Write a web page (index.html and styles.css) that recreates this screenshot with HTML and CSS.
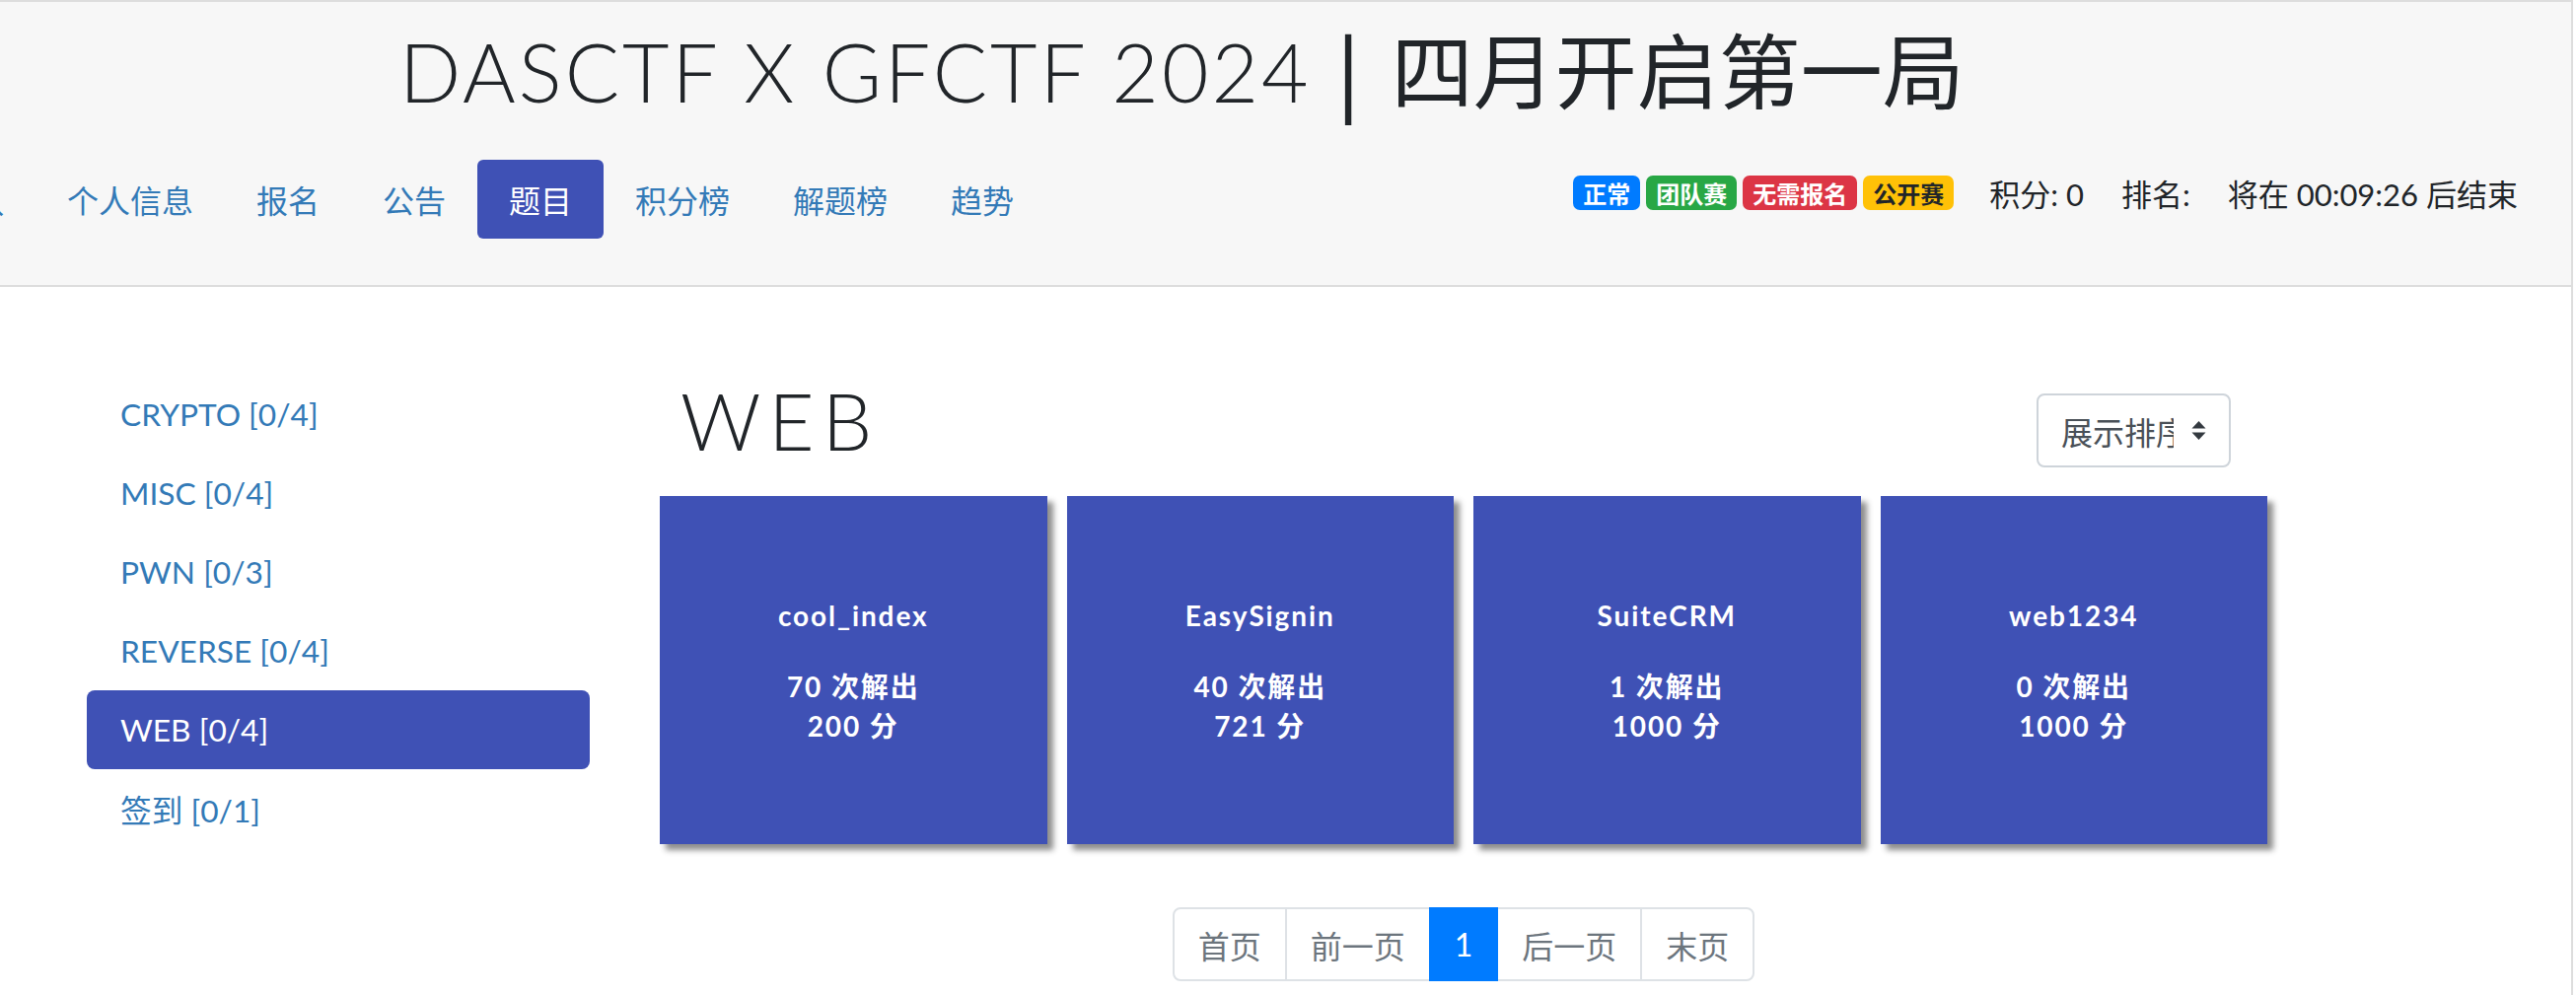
FILE: index.html
```html
<!DOCTYPE html>
<html lang="zh-CN">
<head>
<meta charset="utf-8">
<title>DASCTF X GFCTF 2024 | 四月开启第一局</title>
<link rel="stylesheet" href="styles.css">
</head>
<body>
<div class="page">
  <header class="top">
    <h1 class="title"><span class="title-lat">DASCTF X GFCTF 2024</span><span class="title-bar">|</span><span class="title-cjk">四月开启第一局</span></h1>
    <div class="navrow">
      <ul class="nav">
        <li><a class="nav-link">团队</a></li>
        <li><a class="nav-link">个人信息</a></li>
        <li><a class="nav-link">报名</a></li>
        <li><a class="nav-link">公告</a></li>
        <li><a class="nav-link active">题目</a></li>
        <li><a class="nav-link">积分榜</a></li>
        <li><a class="nav-link">解题榜</a></li>
        <li><a class="nav-link">趋势</a></li>
      </ul>
      <div class="status">
        <span class="badge badge-blue">正常</span>
        <span class="badge badge-green">团队赛</span>
        <span class="badge badge-red">无需报名</span>
        <span class="badge badge-yellow">公开赛</span>
        <span class="stat stat-first">积分: 0</span>
        <span class="stat">排名:</span>
        <span class="stat">将在 00:09:26 后结束</span>
      </div>
    </div>
  </header>

  <div class="content">
    <aside class="side">
      <a class="cat">CRYPTO [0/4]</a>
      <a class="cat">MISC [0/4]</a>
      <a class="cat">PWN [0/3]</a>
      <a class="cat">REVERSE [0/4]</a>
      <a class="cat active">WEB [0/4]</a>
      <a class="cat">签到 [0/1]</a>
    </aside>

    <main class="main">
      <div class="main-head">
        <h2 class="cat-title">WEB</h2>
        <div class="sort">
          <span class="sort-text">展示排序</span>
          <svg class="sort-icon" width="15" height="19" viewBox="0 0 15 19"><path d="M7.5 0 L14.5 7.5 L0.5 7.5 Z M0.5 11.5 L14.5 11.5 L7.5 19 Z" fill="#343a40"/></svg>
        </div>
      </div>

      <div class="cards">
        <div class="card">
          <div class="card-name">cool_index</div>
          <div class="card-stat">70 次解出</div>
          <div class="card-stat">200 分</div>
        </div>
        <div class="card">
          <div class="card-name">EasySignin</div>
          <div class="card-stat">40 次解出</div>
          <div class="card-stat">721 分</div>
        </div>
        <div class="card">
          <div class="card-name">SuiteCRM</div>
          <div class="card-stat">1 次解出</div>
          <div class="card-stat">1000 分</div>
        </div>
        <div class="card">
          <div class="card-name">web1234</div>
          <div class="card-stat">0 次解出</div>
          <div class="card-stat">1000 分</div>
        </div>
      </div>

      <nav class="pager">
        <a class="page-item first">首页</a>
        <a class="page-item">前一页</a>
        <a class="page-item current">1</a>
        <a class="page-item">后一页</a>
        <a class="page-item last">末页</a>
      </nav>
    </main>
  </div>
</div>
</body>
</html>
```

FILE: styles.css
```css
html, body {
  margin: 0;
  padding: 0;
  background: #ffffff;
}

body {
  font-family: Lato, "Noto Sans CJK SC", sans-serif;
  font-size: 32px;
  color: #212529;
  overflow: hidden;
}

.page {
  width: 2609px;
  height: 1009px;
  box-sizing: border-box;
  border-right: 2px solid #dddddd;
  overflow: hidden;
}

/* ---------- header ---------- */
.top {
  background: #f7f7f7;
  border-top: 2px solid #dddddd;
  border-bottom: 2px solid #dddddd;
  height: 291px;
  box-sizing: border-box;
  padding-top: 18px;
}

.title {
  margin: 0;
  padding-left: 405px;
  font-size: 82px;
  font-weight: 300;
  line-height: 96px;
  height: 96px;
  white-space: nowrap;
  color: #212529;
}

.title-lat {
  font-family: Lato, sans-serif;
  font-weight: 300;
  letter-spacing: 3px;
}

.title-bar {
  font-family: "Noto Sans CJK SC", sans-serif;
  font-weight: 500;
  margin: 0 32px 0 26px;
}

.title-cjk {
  font-family: "Noto Sans CJK SC", sans-serif;
  font-weight: 400;
  font-size: 83px;
}

.navrow {
  display: flex;
  justify-content: space-between;
  align-items: center;
  margin-top: 46px;
  padding-right: 54px;
}

.nav {
  list-style: none;
  margin: 0 0 0 -92px;
  padding: 0;
  display: flex;
}

.nav-link {
  display: flex;
  align-items: center;
  height: 80px;
  padding: 0 32px;
  color: #337ab7;
  font-family: "Noto Sans CJK SC", sans-serif;
  font-size: 32px;
  border-radius: 6px;
}

.nav-link.active {
  background: #3f51b5;
  color: #ffffff;
}

.status {
  display: flex;
  align-items: center;
  gap: 6px;
  margin-top: -13px;
}

.badge {
  display: inline-block;
  height: 35px;
  line-height: 35px;
  padding: 0 10px;
  border-radius: 7px;
  font-family: "Noto Sans CJK SC", sans-serif;
  font-weight: 700;
  font-size: 24px;
  color: #ffffff;
}

.badge-blue { background: #007bff; }
.badge-green { background: #28a745; }
.badge-red { background: #dc3545; }
.badge-yellow { background: #ffc107; color: #212529; }

.stat {
  font-size: 31px;
  margin-left: 32px;
  white-space: nowrap;
}

.stat.stat-first {
  margin-left: 30px;
}

/* ---------- content ---------- */
.content {
  display: flex;
  padding-top: 89px;
}

.side {
  margin-left: 88px;
  width: 510px;
  display: flex;
  flex-direction: column;
}

.cat {
  display: flex;
  align-items: center;
  height: 80px;
  padding-left: 34px;
  color: #337ab7;
  font-size: 31.7px;
  border-radius: 8px;
}

.cat.active {
  background: #3f51b5;
  color: #ffffff;
}

.main {
  margin-left: 71px;
  width: 1630px;
  padding-top: 6px;
}

.main-head {
  display: flex;
  justify-content: space-between;
  align-items: flex-start;
  padding: 0 37px 0 21px;
  height: 88px;
}

.cat-title {
  margin: 0;
  font-family: Lato, sans-serif;
  font-weight: 300;
  font-size: 80px;
  line-height: 80px;
  letter-spacing: 8px;
  color: #212529;
}

.sort {
  margin-top: 13px;
  width: 197px;
  height: 75px;
  box-sizing: border-box;
  border: 2px solid #ced4da;
  border-radius: 8px;
  background: #ffffff;
  display: flex;
  align-items: center;
  padding: 0 25px 0 23px;
}

.sort-text {
  width: 114px;
  flex: none;
  overflow: hidden;
  white-space: nowrap;
  color: #495057;
  font-family: "Noto Sans CJK SC", sans-serif;
  font-size: 32px;
}

.sort-icon {
  flex: none;
  margin-left: 18px;
}

.cards {
  margin-top: 29px;
  display: grid;
  grid-template-columns: repeat(4, 392.5px);
  column-gap: 20px;
}

.card {
  height: 353px;
  background: #3f51b5;
  box-shadow: 6px 6px 6px rgba(0, 0, 0, 0.45);
  color: #ffffff;
  font-weight: 700;
  font-size: 28px;
  letter-spacing: 1.9px;
  display: flex;
  flex-direction: column;
  justify-content: center;
  align-items: center;
}

.card-name {
  line-height: 40px;
  margin-bottom: 32px;
}

.card-stat {
  line-height: 40px;
}

.pager {
  margin-top: 64px;
  display: flex;
  justify-content: center;
}

.page-item {
  display: flex;
  align-items: center;
  height: 75px;
  box-sizing: border-box;
  padding: 0 24px;
  border: 2px solid #dee2e6;
  margin-left: -2px;
  color: #6c757d;
  font-family: Lato, "Noto Sans CJK SC", sans-serif;
  font-size: 32px;
  background: #ffffff;
}

.page-item.first {
  margin-left: 0;
  border-radius: 8px 0 0 8px;
}

.page-item.last {
  border-radius: 0 8px 8px 0;
}

.page-item.current {
  background: #007bff;
  border-color: #007bff;
  color: #ffffff;
  position: relative;
  z-index: 1;
}
```
